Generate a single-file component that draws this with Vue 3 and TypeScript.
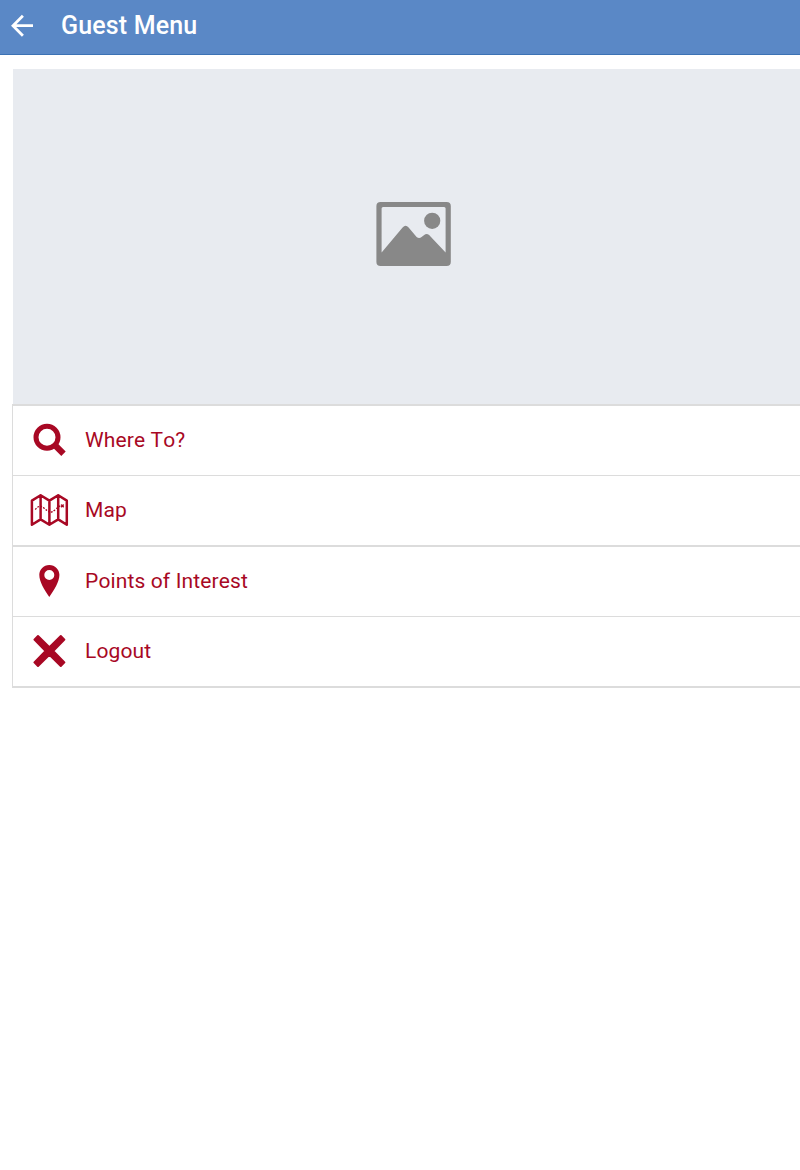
<script setup lang="ts">
type IconName = 'search' | 'map' | 'pin' | 'close'

interface MenuItem {
  label: string
  icon: IconName
  thick: boolean
}

const items: MenuItem[] = [
  { label: 'Where To?', icon: 'search', thick: false },
  { label: 'Map', icon: 'map', thick: true },
  { label: 'Points of Interest', icon: 'pin', thick: false },
  { label: 'Logout', icon: 'close', thick: true },
]
</script>

<template>
  <div class="page">
    <header class="bar">
      <button class="back" aria-label="Back">
        <svg width="24" height="24" viewBox="0 0 24 24" fill="none" stroke="#fff" stroke-width="2.8">
          <path d="M12.9 1.7 3 11.7 12.9 21.7M3.4 11.7H23" />
        </svg>
      </button>
      <h1 class="title">Guest Menu</h1>
    </header>
    <main class="content">
      <div class="banner">
        <svg class="picture" width="76" height="66" viewBox="0.4 0 76 66">
          <path
            fill="#888"
            fill-rule="evenodd"
            d="M5 1H71Q75.2 1 75.2 5V61Q75.2 65 71 65H5Q.8 65 .8 61V5Q.8 1 5 1ZM7.5 6Q6 6 6 7.5V51.5L27 26.5Q30 23.2 33 26.5L41 36Q43.5 38.2 46 36L48.6 34Q51 32 53.5 34L70 51.5V7.5Q70 6 68.5 6Z"
          />
          <circle cx="56.6" cy="19.8" r="8.1" fill="#888" />
        </svg>
      </div>
      <nav class="list">
        <a v-for="item in items" :key="item.label" class="row" :class="{ thick: item.thick }">
          <svg v-if="item.icon === 'search'" class="icon" width="40" height="40" viewBox="0 0 40 40">
            <g fill="none" stroke="#a80824">
              <circle cx="18" cy="17.2" r="11" stroke-width="5" />
              <path d="M25 24.3 34.5 33.7" stroke-width="6.2" />
            </g>
          </svg>
          <svg v-else-if="item.icon === 'map'" class="icon" width="40" height="40" viewBox="0 0 40 40">
            <g fill="none" stroke="#a80824" stroke-linejoin="round" stroke-linecap="round">
              <path
                stroke-width="2.5"
                d="M2.9 10.6 11.6 5.2 20.4 10.6 29.2 5.2 37.8 10.6V34.8L29.2 29.4 20.4 34.8 11.6 29.4 2.9 34.8ZM11.6 5.2V29.4M20.4 10.6V34.8M29.2 5.2V29.4"
              />
              <path stroke-width="1.4" stroke-dasharray=".6 2.5" d="M6.6 19.1Q10.5 14.3 14.5 17.7T20.5 22 26.2 19.7 31 15.9" />
              <path stroke-width="1.5" d="m32.5 15 1.8 1.8m0-1.8-1.8 1.8" />
            </g>
          </svg>
          <svg v-else-if="item.icon === 'pin'" class="icon" width="40" height="40" viewBox="0 0 40 40">
            <path
              fill="#a80824"
              fill-rule="evenodd"
              d="M20.3 3.9C14.6 3.9 10.3 8.4 10.3 13.8C10.3 21 15.5 29 20.3 36C25.1 29 30.4 21 30.4 13.8C30.4 8.4 26 3.9 20.3 3.9ZM20.3 9A5 5 0 1 1 20.3 19A5 5 0 1 1 20.3 9Z"
            />
          </svg>
          <svg v-else class="icon" width="40" height="40" viewBox="0 0 40 40">
            <path
              fill="#a80824"
              stroke="#a80824"
              stroke-width="2"
              stroke-linejoin="round"
              d="M5.4 8.6 9 5 20.4 16.2 31.8 5 35.4 8.6 24.2 20 35.4 31.4 31.8 35 20.4 23.8 9 35 5.4 31.4 16.6 20Z"
            />
          </svg>
          <span class="label">{{ item.label }}</span>
        </a>
      </nav>
    </main>
  </div>
</template>

<style>
html,
body {
  margin: 0;
  background: #fff;
  overflow: hidden;
}
</style>

<style scoped>
.page {
  height: 1170px;
  font-family: Roboto, sans-serif;
}
.bar {
  box-sizing: border-box;
  height: 55px;
  display: flex;
  align-items: center;
  padding: 0 0 3px 10px;
  background: #5a88c6;
  border-bottom: 1px solid #3c72b4;
}
.back {
  display: flex;
  width: 24px;
  height: 24px;
  margin: 1px 27px 0 0;
  padding: 0;
  border: 0;
  background: none;
}
.title {
  margin: 0;
  font-size: 25px;
  font-weight: 500;
  line-height: 30px;
  letter-spacing: 0.15px;
  color: #fff;
}
.content {
  padding: 14px 0 0 12px;
}
.banner {
  height: 335px;
  margin-left: 1px;
  display: flex;
  justify-content: center;
  background: #e8ebf0;
}
.picture {
  margin: 132px 0 0 14px;
}
.list {
  border-top: 2px solid #dcdcdc;
  border-left: 1px solid #dcdcdc;
}
.row {
  box-sizing: border-box;
  display: flex;
  align-items: center;
  height: 70px;
  padding: 0 0 2px 16px;
  border-bottom: 1px solid #dcdcdc;
}
.row.thick {
  height: 71px;
  border-bottom-width: 2px;
}
.icon {
  flex: none;
}
.label {
  margin-left: 16px;
  font-size: 21px;
  font-weight: 400;
  font-kerning: none;
  letter-spacing: 0.13px;
  line-height: 30px;
  color: #a80824;
}
</style>
